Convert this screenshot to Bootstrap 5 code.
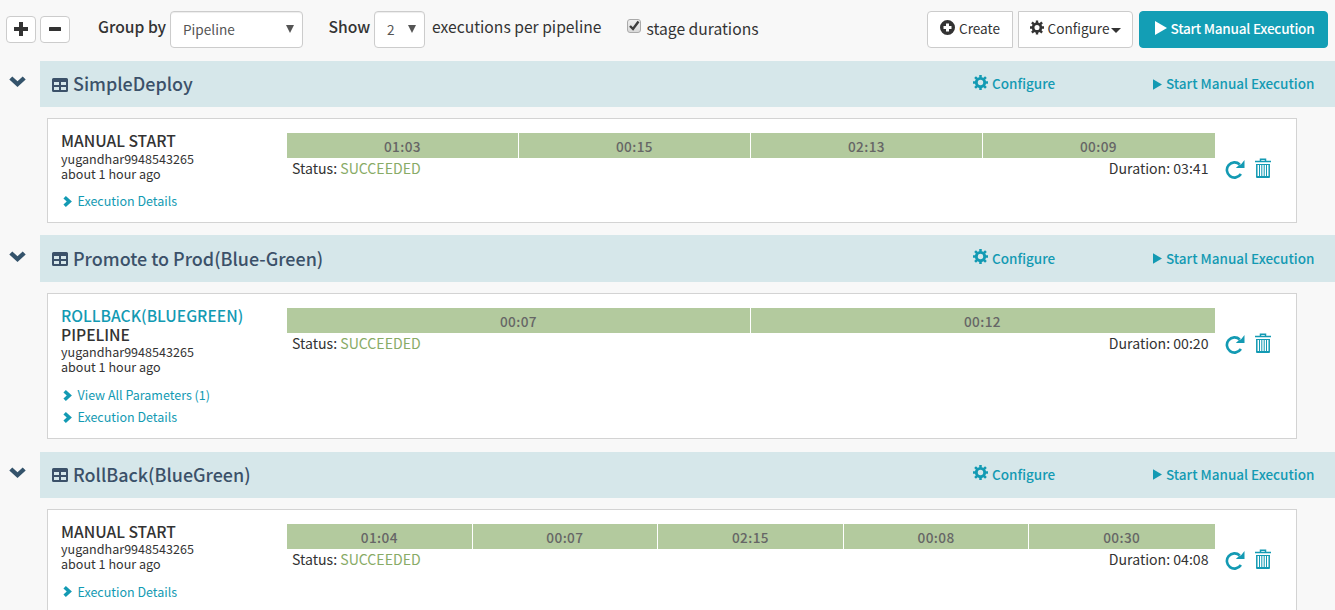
<!DOCTYPE html>
<html lang="en">
<head>
<meta charset="utf-8">
<title>Pipelines</title>
<link rel="stylesheet" href="https://cdn.jsdelivr.net/npm/bootstrap@5.3.0/dist/css/bootstrap.min.css">
<style>
body{font-family:"Noto Sans CJK SC","Open Sans",sans-serif;font-size:14px;line-height:20px;color:#333;background:#f8f8f8;height:610px;overflow:hidden}
svg{fill:currentColor;flex:none;display:block}
a{color:#139ab3;text-decoration:none}
.toolbar{height:61px;padding:11px 7px 0 6px;font-size:15.65px}
.sq{width:30px;height:27px;border:1px solid #ccc;border-radius:4px;background:#fff;padding:0 0 1px;color:#333;display:flex;align-items:center;justify-content:center;margin-top:5px}
.pick{height:37px;border:1px solid #ccc;border-radius:4px;background:#fff;color:#555;font-size:13.6px;padding:0 8px 0 12px;box-shadow:inset 0 1px 1px rgba(0,0,0,.075)}
.pick span{padding-bottom:2px}
.pick svg{margin-top:-1px}
.tick{width:14px;height:14px;border:1px solid #aaa;border-radius:3px;background:linear-gradient(#eee,#d9d9d9);margin-top:8px}
.tool{height:37px;border:1px solid #ccc;background:#fff;color:#333;font-size:13.6px;border-radius:4px;padding:0 0 3px}
.tool-main{background:#139eb5;border-color:#139eb5;color:#fff;font-weight:500;letter-spacing:-.25px;padding-left:2px}
.lbl{line-height:32px;white-space:nowrap}
.fold{width:40px;padding:15.3px 0 0 9px;color:#34536b}
.head{height:46.4px;background:#d6e7ea;color:#3b5169;padding-left:12px}
.head h4{font-size:17.93px;font-weight:500;line-height:44px;margin:0 0 2px 5px}
.head svg{margin-top:1px}
.head a{font-weight:500;font-size:13.5px;padding-bottom:2px}
.head .conf svg{margin-top:-2px}
.head .start svg{margin-top:2px}
.conf{width:180px;gap:4px}
.start{width:182px;gap:4px}
.exec{margin:11px 38px 12.15px 7px;border:1px solid #d3d3d3;background:#fff;padding:12px 0 9.6px 13px}
.info{width:226px}
.kind{font-size:15.67px;line-height:19.2px;font-weight:500}
.who{font-size:12.57px;line-height:15px}
.links{margin-top:9.6px}
.links a{font-size:12.5px;line-height:22.5px;display:flex;align-items:center;padding-left:2px;gap:5.5px}
.runs{width:928px;padding-top:2px}
.stages{height:25px}
.stages span{background:#b3ca9e;color:#666;font-weight:500;font-size:13.6px;letter-spacing:.4px;text-align:center;line-height:27px;flex:1 1 0;padding-right:1px;box-shadow:inset -1px 0 #fff}
.stages span:last-child{box-shadow:none}
.sum{padding:0 6.500px 0 5px;line-height:20px;font-size:14.1px}
.ok{color:#88ab66}
.acts{padding:27px 0 0 10px;gap:10px;color:#139ab3}
.acts svg:first-child{margin-top:2px}
</style>
</head>
<body>
<svg width="0" height="0" class="position-absolute">
<symbol id="gear" viewBox="0 0 16 16"><g><path fill-rule="evenodd" d="M8 2A6 6 0 1 0 8 14 6 6 0 0 0 8 2zm0 3.100a2.900 2.900 0 1 1 0 5.800 2.900 2.900 0 0 1 0-5.800z"/><path stroke="currentColor" stroke-width="2.700" d="M8 0v3M8 13v3M0 8h3M13 8h3M2.200 2.200l2 2M11.800 11.800l2 2M13.800 2.200l-2 2M4.200 11.800l-2 2"/></g></symbol>
<symbol id="play" viewBox="0 0 12 14"><path d="M0 0l12 7-12 7z"/></symbol>
<symbol id="grid" viewBox="0 0 16 14"><path fill-rule="evenodd" d="M1.500 0h13Q16 0 16 1.500v11q0 1.500-1.500 1.500h-13Q0 14 0 12.500v-11Q0 0 1.500 0zM2 4v3h5V4zm7 0v3h5V4zM2 9v3h5V9zm7 0v3h5V9z"/></symbol>
<symbol id="down" viewBox="0 0 17 11"><path d="M.3 3.500L3.300.5l5.200 4.700L13.700.5l3 3-8.200 7.500z"/></symbol>
<symbol id="right" viewBox="0 0 8 10"><path d="M.3 2.200L2.500 0 8 5l-5.500 5-2.200-2.200 3-2.800z"/></symbol>
<symbol id="redo" viewBox="0 0 18 18"><path fill="none" stroke="currentColor" stroke-width="2.500" d="M14.600 13.300A7.200 7.200 0 1 1 13.500 4.200"/><path d="M18 0v7.500H9.800l2.500-2.400 2.700-1.300z"/></symbol>
<symbol id="trash" viewBox="0 0 16 20"><path fill="none" stroke="currentColor" stroke-width="1.500" d="M5.500 3V1.200h5V3M1.800 6v12.800h12.400V6"/><path d="M0 2.700h16v1.500H0zM1 6h14v1H1zM4 7h1v11H4zM6.300 7h1v11H6.300zM8.700 7h1v11H8.700zM11 7h1v11H11zM1.500 18h13v2h-13z"/></symbol>
</svg>

<div class="toolbar d-flex align-items-start">
  <button class="sq"><svg width="14" height="14" viewBox="0 0 14 14"><path d="M5 0h4v5h5v4H9v5H5V9H0V5h5z"/></svg></button>
  <button class="sq" style="margin-left:4px"><svg width="12" height="4"><rect width="12" height="4" rx=".5"/></svg></button>
  <span class="lbl" style="margin-left:28px;width:72px;font-weight:500">Group by</span>
  <div class="pick d-flex align-items-center justify-content-between" style="width:133px"><span>Pipeline</span><svg width="8" height="8"><path d="M0 0h8L4 8z"/></svg></div>
  <span class="lbl" style="margin-left:25.500px;width:45.500px;font-weight:500">Show</span>
  <div class="pick d-flex align-items-center justify-content-between" style="width:51px"><span>2</span><svg width="8" height="8"><path d="M0 0h8L4 8z"/></svg></div>
  <span class="lbl" style="margin-left:7px;width:195px">executions per pipeline</span>
  <div class="tick"><svg width="12" height="12" viewBox="0 0 12 12"><path fill="none" stroke="#3c3c3c" stroke-width="2.400" d="M2 6l3 3 5.500-7.500"/></svg></div>
  <span class="lbl" style="margin-left:5.500px;line-height:36px">stage durations</span>
  <div class="d-flex ms-auto">
    <button class="tool d-flex align-items-center justify-content-center gap-1 rounded-end-0" style="width:86px"><svg width="15" height="15" viewBox="0 0 15 15" style="margin-top:-2px"><path fill-rule="evenodd" d="M7.500 0a7.500 7.500 0 1 0 0 15 7.500 7.500 0 0 0 0-15zM6 3.500h3V6h2.500v3H9v2.500H6V9H3.500V6H6z"/></svg><span>Create</span></button>
    <button class="tool d-flex align-items-center justify-content-center rounded-start-0" style="width:115px;margin-left:5px"><svg width="14" height="15" style="margin:-2px 4px 0 0"><use href="#gear"/></svg><span>Configure</span><svg width="10" height="5" style="margin:4px 0 0 2px"><path d="M0 0h10L5 5z"/></svg></button>
    <button class="tool tool-main d-flex align-items-center justify-content-center" style="width:189px;margin-left:6px"><svg width="12" height="14" class="me-1"><use href="#play"/></svg><span>Start Manual Execution</span></button>
  </div>
</div>

<section class="d-flex">
  <div class="fold"><svg width="17" height="11"><use href="#down"/></svg></div>
  <div class="flex-grow-1">
    <div class="head d-flex align-items-center"><svg width="16" height="14"><use href="#grid"/></svg><h4>SimpleDeploy</h4>
      <a href="#" class="ms-auto d-flex align-items-center conf"><svg width="15" height="15"><use href="#gear"/></svg><span>Configure</span></a>
      <a href="#" class="d-flex align-items-center start"><svg width="9" height="11"><use href="#play"/></svg><span>Start Manual Execution</span></a></div>
    <div class="exec d-flex">
      <div class="info"><div class="kind">MANUAL START</div><div class="who">yugandhar9948543265</div><div class="who">about 1 hour ago</div>
        <div class="links"><a href="#"><svg width="9" height="11"><use href="#right"/></svg>Execution Details</a></div></div>
      <div class="runs"><div class="stages d-flex"><span>01:03</span><span>00:15</span><span>02:13</span><span>00:09</span></div>
        <div class="sum d-flex justify-content-between"><span>Status: <span class="ok">SUCCEEDED</span></span><span>Duration: 03:41</span></div></div>
      <div class="acts d-flex"><svg width="20" height="19"><use href="#redo"/></svg><svg width="16" height="20"><use href="#trash"/></svg></div>
    </div>
  </div>
</section>

<section class="d-flex">
  <div class="fold"><svg width="17" height="11"><use href="#down"/></svg></div>
  <div class="flex-grow-1">
    <div class="head d-flex align-items-center"><svg width="16" height="14"><use href="#grid"/></svg><h4>Promote to Prod(Blue-Green)</h4>
      <a href="#" class="ms-auto d-flex align-items-center conf"><svg width="15" height="15"><use href="#gear"/></svg><span>Configure</span></a>
      <a href="#" class="d-flex align-items-center start"><svg width="9" height="11"><use href="#play"/></svg><span>Start Manual Execution</span></a></div>
    <div class="exec d-flex">
      <div class="info"><div class="kind"><a href="#">ROLLBACK(BLUEGREEN)</a></div><div class="kind">PIPELINE</div><div class="who">yugandhar9948543265</div><div class="who">about 1 hour ago</div>
        <div class="links"><a href="#"><svg width="9" height="11"><use href="#right"/></svg>View All Parameters (1)</a><a href="#"><svg width="9" height="11"><use href="#right"/></svg>Execution Details</a></div></div>
      <div class="runs"><div class="stages d-flex"><span>00:07</span><span>00:12</span></div>
        <div class="sum d-flex justify-content-between"><span>Status: <span class="ok">SUCCEEDED</span></span><span>Duration: 00:20</span></div></div>
      <div class="acts d-flex"><svg width="20" height="19"><use href="#redo"/></svg><svg width="16" height="20"><use href="#trash"/></svg></div>
    </div>
  </div>
</section>

<section class="d-flex">
  <div class="fold"><svg width="17" height="11"><use href="#down"/></svg></div>
  <div class="flex-grow-1">
    <div class="head d-flex align-items-center"><svg width="16" height="14"><use href="#grid"/></svg><h4>RollBack(BlueGreen)</h4>
      <a href="#" class="ms-auto d-flex align-items-center conf"><svg width="15" height="15"><use href="#gear"/></svg><span>Configure</span></a>
      <a href="#" class="d-flex align-items-center start"><svg width="9" height="11"><use href="#play"/></svg><span>Start Manual Execution</span></a></div>
    <div class="exec d-flex">
      <div class="info"><div class="kind">MANUAL START</div><div class="who">yugandhar9948543265</div><div class="who">about 1 hour ago</div>
        <div class="links"><a href="#"><svg width="9" height="11"><use href="#right"/></svg>Execution Details</a></div></div>
      <div class="runs"><div class="stages d-flex"><span>01:04</span><span>00:07</span><span>02:15</span><span>00:08</span><span>00:30</span></div>
        <div class="sum d-flex justify-content-between"><span>Status: <span class="ok">SUCCEEDED</span></span><span>Duration: 04:08</span></div></div>
      <div class="acts d-flex"><svg width="20" height="19"><use href="#redo"/></svg><svg width="16" height="20"><use href="#trash"/></svg></div>
    </div>
  </div>
</section>
<script src="https://cdn.jsdelivr.net/npm/bootstrap@5.3.0/dist/js/bootstrap.bundle.min.js"></script>
</body>
</html>
